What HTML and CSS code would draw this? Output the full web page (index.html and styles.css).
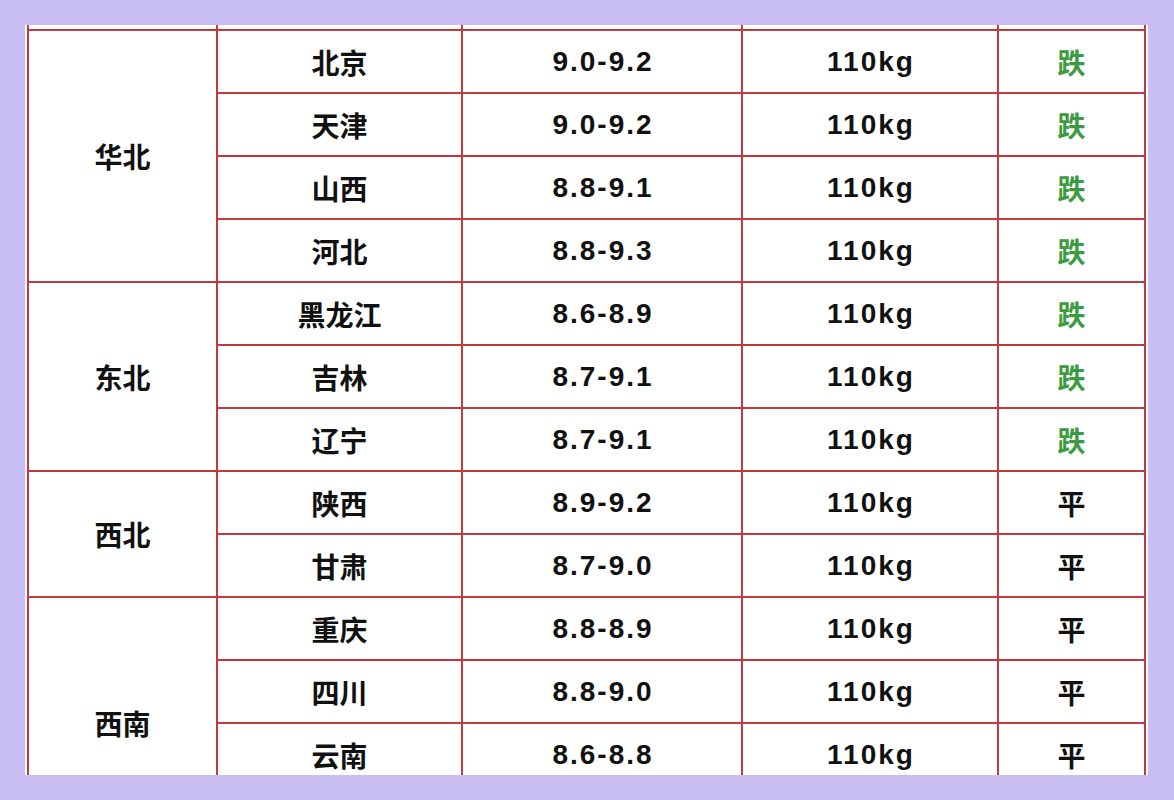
FILE: index.html
```html
<!DOCTYPE html>
<html lang="zh-CN">
<head>
<meta charset="utf-8">
<title>生猪价格</title>
<link rel="stylesheet" href="styles.css">
</head>
<body>
<div class="sheet">
  <div class="grid">
    <div class="spacer"></div><div class="spacer"></div><div class="spacer"></div><div class="spacer"></div><div class="spacer"></div>

    <div class="cell region r4">华北</div>
    <div class="cell">北京</div><div class="cell num">9.0-9.2</div><div class="cell num">110kg</div><div class="cell down">跌</div>
    <div class="cell">天津</div><div class="cell num">9.0-9.2</div><div class="cell num">110kg</div><div class="cell down">跌</div>
    <div class="cell">山西</div><div class="cell num">8.8-9.1</div><div class="cell num">110kg</div><div class="cell down">跌</div>
    <div class="cell">河北</div><div class="cell num">8.8-9.3</div><div class="cell num">110kg</div><div class="cell down">跌</div>

    <div class="cell region r3">东北</div>
    <div class="cell">黑龙江</div><div class="cell num">8.6-8.9</div><div class="cell num">110kg</div><div class="cell down">跌</div>
    <div class="cell">吉林</div><div class="cell num">8.7-9.1</div><div class="cell num">110kg</div><div class="cell down">跌</div>
    <div class="cell">辽宁</div><div class="cell num">8.7-9.1</div><div class="cell num">110kg</div><div class="cell down">跌</div>

    <div class="cell region r2">西北</div>
    <div class="cell">陕西</div><div class="cell num">8.9-9.2</div><div class="cell num">110kg</div><div class="cell">平</div>
    <div class="cell">甘肃</div><div class="cell num">8.7-9.0</div><div class="cell num">110kg</div><div class="cell">平</div>

    <div class="cell region r4">西南</div>
    <div class="cell">重庆</div><div class="cell num">8.8-8.9</div><div class="cell num">110kg</div><div class="cell">平</div>
    <div class="cell">四川</div><div class="cell num">8.8-9.0</div><div class="cell num">110kg</div><div class="cell">平</div>
    <div class="cell">云南</div><div class="cell num">8.6-8.8</div><div class="cell num">110kg</div><div class="cell">平</div>
    <div class="cell"></div><div class="cell"></div><div class="cell"></div><div class="cell"></div>
  </div>
</div>
</body>
</html>
```
FILE: styles.css
```css
html, body {
  margin: 0;
  padding: 0;
}
body {
  background: #c8bef2;
  padding: 25px;
  width: 1123px;
  height: 750px;
}
.sheet {
  background: #ffffff;
  width: 1123px;
  height: 750px;
  padding: 0 2px;
  box-sizing: border-box;
  overflow: hidden;
}
.grid {
  display: grid;
  background: #c23a3e;
  padding: 0 2px;
  gap: 2px;
  grid-template-columns: 187px 243px 278px 254px 145px;
  grid-template-rows: 4px repeat(13, 61px);
}
.spacer {
  background: #ffffff;
}
.cell {
  background: #ffffff;
  display: flex;
  align-items: center;
  justify-content: center;
  font-family: "Liberation Sans", "Noto Sans CJK SC", sans-serif;
  font-weight: 700;
  font-size: 28px;
  color: #111111;
}
.num {
  letter-spacing: 2px;
  padding-left: 2px;
}
.down {
  color: #3d9b3f;
}
.r4 { grid-row: span 4; }
.r3 { grid-row: span 3; }
.r2 { grid-row: span 2; }
```
